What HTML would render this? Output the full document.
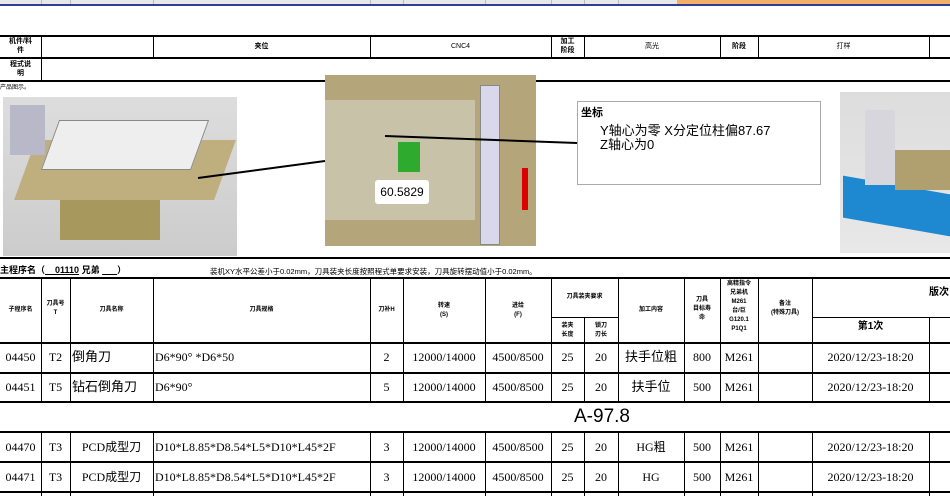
<!DOCTYPE html>
<html><head><meta charset="utf-8"><style>
body{margin:0;width:950px;height:496px;overflow:hidden;background:#fff;font-family:"Liberation Sans","Noto Sans CJK SC",sans-serif;position:relative}
div{position:absolute;box-sizing:border-box}
.h{background:#000;height:2px}
.v{background:#000;width:1px}
.t{font-size:7px;font-weight:bold;text-align:center;line-height:9px}
.c{font-family:"Liberation Serif","Noto Sans CJK SC",serif;font-size:12px;text-align:center;line-height:30px;height:30px}
.g{background:#bbb;width:1px;top:0;height:4px}
</style></head><body>
<div style="left:0;top:0;width:950px;height:4px;background:#e8e8e8"></div>
<div style="left:677px;top:0;width:273px;height:4px;background:#f4b066"></div>
<div class="g" style="left:41px"></div><div class="g" style="left:70px"></div><div class="g" style="left:153px"></div><div class="g" style="left:370px"></div><div class="g" style="left:403px"></div><div class="g" style="left:485px"></div><div class="g" style="left:551px"></div><div class="g" style="left:584px"></div><div class="g" style="left:618px"></div>
<div style="left:0;top:4px;width:950px;height:2px;background:#2b3f9a"></div>

<div class="h" style="left:0;top:35px;width:950px"></div>
<div class="h" style="left:0;top:57px;width:950px"></div>
<div class="h" style="left:0;top:80px;width:950px"></div>
<div class="v" style="left:41px;top:35px;height:46px"></div>
<div class="v" style="left:153px;top:35px;height:23px"></div>
<div class="v" style="left:370px;top:35px;height:23px"></div>
<div class="v" style="left:551px;top:35px;height:23px"></div>
<div class="v" style="left:584px;top:35px;height:23px"></div>
<div class="v" style="left:720px;top:35px;height:23px"></div>
<div class="v" style="left:758px;top:35px;height:23px"></div>
<div class="v" style="left:929px;top:35px;height:23px"></div>
<div class="t" style="left:0;top:37px;width:41px">机件/料<br>件</div>
<div class="t" style="left:153px;top:42px;width:217px">夹位</div>
<div class="t" style="left:370px;top:42px;width:181px;font-weight:normal">CNC4</div>
<div class="t" style="left:551px;top:37px;width:33px">加工<br>阶段</div>
<div class="t" style="left:584px;top:42px;width:136px;font-weight:normal">高光</div>
<div class="t" style="left:720px;top:42px;width:38px">阶段</div>
<div class="t" style="left:758px;top:42px;width:171px;font-weight:normal">打样</div>
<div class="t" style="left:0;top:60px;width:41px">程式说<br>明</div>
<div class="t" style="left:0;top:84px;font-size:6px;font-weight:normal">产品图示。</div>

<div style="left:3px;top:97px;width:234px;height:159px;background:linear-gradient(#ddd,#ccc)"></div>
<div style="left:25px;top:140px;width:200px;height:60px;background:#bfae7e;transform:skewX(-20deg)"></div>
<div style="left:50px;top:120px;width:150px;height:50px;background:#eee;border:1px solid #888;transform:skewX(-20deg)"></div>
<div style="left:60px;top:200px;width:100px;height:40px;background:#a7985d"></div>
<div style="left:10px;top:105px;width:35px;height:50px;background:#b8b8c8"></div>
<div style="left:325px;top:75px;width:211px;height:171px;background:#b4a67a"></div>
<div style="left:325px;top:100px;width:150px;height:120px;background:#c8c2a8"></div>
<div style="left:480px;top:85px;width:20px;height:160px;background:#d8d8ea;border:1px solid #888"></div>
<div style="left:398px;top:142px;width:22px;height:30px;background:#2eaa2e"></div>
<div style="left:522px;top:168px;width:6px;height:42px;background:#d00"></div>
<div style="left:375px;top:180px;width:54px;height:24px;background:#fff;border-radius:3px;font-size:12px;line-height:24px;text-align:center">60.5829</div>
<svg style="position:absolute;left:0;top:0" width="950" height="300"><line x1="198" y1="178" x2="325" y2="161" stroke="#000" stroke-width="2"/><line x1="385" y1="136" x2="577" y2="143" stroke="#000" stroke-width="2"/></svg>
<div style="left:577px;top:101px;width:244px;height:84px;border:1px solid #aaa;background:#fff;font-size:13px;line-height:14px">
<div style="left:3px;top:4px;font-weight:bold;font-size:11px">坐标</div>
<div style="left:22px;top:22px">Y轴心为零 X分定位柱偏87.67</div>
<div style="left:22px;top:36px">Z轴心为0</div></div>
<div style="left:840px;top:92px;width:110px;height:161px;background:linear-gradient(#ddd,#e8e8e8)"></div>
<div style="left:843px;top:185px;width:107px;height:42px;background:#1e88d0;transform:skewY(10deg)"></div>
<div style="left:865px;top:110px;width:30px;height:75px;background:#d6d6dc"></div>
<div style="left:895px;top:150px;width:55px;height:40px;background:#b0a070"></div>
<div class="h" style="left:0;top:257px;width:950px"></div>

<div class="t" style="left:0;top:266px;font-size:9px;text-align:left">主程序名（<u>&nbsp;&nbsp;&nbsp;&nbsp;01110</u> 兄弟 <u>&nbsp;&nbsp;&nbsp;&nbsp;&nbsp;&nbsp;</u>）</div>
<div class="t" style="left:210px;top:267px;font-size:7.5px;text-align:left;font-weight:normal">装机XY水平公差小于0.02mm，刀具装夹长度按照程式单要求安装，刀具旋转摆动值小于0.02mm。</div>

<div class="h" style="left:0;top:277px;width:950px"></div>
<div class="h" style="left:551px;top:317px;width:67px;height:1px"></div>
<div class="h" style="left:812px;top:317px;width:138px;height:1px"></div>
<div class="h" style="left:0;top:342px;width:950px"></div>
<div class="h" style="left:0;top:372px;width:950px"></div>
<div class="h" style="left:0;top:401px;width:950px"></div>
<div class="h" style="left:0;top:431px;width:950px"></div>
<div class="h" style="left:0;top:461px;width:950px"></div>
<div class="h" style="left:0;top:491px;width:950px"></div>
<div class="v" style="left:41px;top:277px;height:125px"></div><div class="v" style="left:41px;top:431px;height:65px"></div>
<div class="v" style="left:70px;top:277px;height:125px"></div><div class="v" style="left:70px;top:431px;height:65px"></div>
<div class="v" style="left:153px;top:277px;height:125px"></div><div class="v" style="left:153px;top:431px;height:65px"></div>
<div class="v" style="left:370px;top:277px;height:125px"></div><div class="v" style="left:370px;top:431px;height:65px"></div>
<div class="v" style="left:403px;top:277px;height:125px"></div><div class="v" style="left:403px;top:431px;height:65px"></div>
<div class="v" style="left:485px;top:277px;height:125px"></div><div class="v" style="left:485px;top:431px;height:65px"></div>
<div class="v" style="left:551px;top:277px;height:125px"></div><div class="v" style="left:551px;top:431px;height:65px"></div>
<div class="v" style="left:584px;top:318px;height:84px"></div><div class="v" style="left:584px;top:431px;height:65px"></div>
<div class="v" style="left:618px;top:277px;height:125px"></div><div class="v" style="left:618px;top:431px;height:65px"></div>
<div class="v" style="left:684px;top:277px;height:125px"></div><div class="v" style="left:684px;top:431px;height:65px"></div>
<div class="v" style="left:720px;top:277px;height:125px"></div><div class="v" style="left:720px;top:431px;height:65px"></div>
<div class="v" style="left:758px;top:277px;height:125px"></div><div class="v" style="left:758px;top:431px;height:65px"></div>
<div class="v" style="left:812px;top:277px;height:125px"></div><div class="v" style="left:812px;top:431px;height:65px"></div>
<div class="v" style="left:929px;top:318px;height:84px"></div><div class="v" style="left:929px;top:431px;height:65px"></div>

<div class="t" style="left:0;top:306px;width:41px;font-size:6px">子程序名</div>
<div class="t" style="left:41px;top:300px;width:29px;font-size:6px">刀具号<br>T</div>
<div class="t" style="left:70px;top:306px;width:83px;font-size:6px">刀具名称</div>
<div class="t" style="left:153px;top:306px;width:217px;font-size:6px">刀具规格</div>
<div class="t" style="left:370px;top:306px;width:33px;font-size:6px">刀补H</div>
<div class="t" style="left:403px;top:302px;width:82px;font-size:6px">转速<br>(S)</div>
<div class="t" style="left:485px;top:302px;width:66px;font-size:6px">进给<br>(F)</div>
<div class="t" style="left:551px;top:293px;width:67px;font-size:6px">刀具装夹要求</div>
<div class="t" style="left:551px;top:322px;width:33px;font-size:6px">装夹<br>长度</div>
<div class="t" style="left:584px;top:322px;width:34px;font-size:6px">锁刀<br>刃长</div>
<div class="t" style="left:618px;top:306px;width:66px;font-size:6px">加工内容</div>
<div class="t" style="left:684px;top:296px;width:36px;font-size:6px">刀具<br>目标寿<br>命</div>
<div class="t" style="left:720px;top:280px;width:38px;font-size:6px">高精指令<br>兄弟机<br>M261<br>台/巨<br>G120.1<br>P1Q1</div>
<div class="t" style="left:758px;top:300px;width:54px;font-size:6px">备注<br>(特殊刀具)</div>
<div class="t" style="left:929px;top:288px;font-size:10px;text-align:left;white-space:nowrap">版次</div>
<div class="t" style="left:812px;top:322px;width:117px;font-size:10px">第1次</div>

<div class="c" style="left:0;top:342px;width:41px">04450</div><div class="c" style="left:41px;top:342px;width:29px">T2</div><div class="c" style="left:72px;top:342px;text-align:left;font-size:13px">倒角刀</div><div class="c" style="left:155px;top:342px;text-align:left">D6*90° *D6*50</div><div class="c" style="left:370px;top:342px;width:33px">2</div><div class="c" style="left:403px;top:342px;width:82px">12000/14000</div><div class="c" style="left:485px;top:342px;width:66px">4500/8500</div><div class="c" style="left:551px;top:342px;width:33px">25</div><div class="c" style="left:584px;top:342px;width:34px">20</div><div class="c" style="left:618px;top:342px;width:66px;font-size:13px">扶手位粗</div><div class="c" style="left:684px;top:342px;width:36px">800</div><div class="c" style="left:720px;top:342px;width:38px">M261</div><div class="c" style="left:812px;top:342px;width:117px">2020/12/23-18:20</div>

<div class="c" style="left:0;top:372px;width:41px">04451</div><div class="c" style="left:41px;top:372px;width:29px">T5</div><div class="c" style="left:72px;top:372px;text-align:left;font-size:13px">钻石倒角刀</div><div class="c" style="left:155px;top:372px;text-align:left">D6*90°</div><div class="c" style="left:370px;top:372px;width:33px">5</div><div class="c" style="left:403px;top:372px;width:82px">12000/14000</div><div class="c" style="left:485px;top:372px;width:66px">4500/8500</div><div class="c" style="left:551px;top:372px;width:33px">25</div><div class="c" style="left:584px;top:372px;width:34px">20</div><div class="c" style="left:618px;top:372px;width:66px;font-size:13px">扶手位</div><div class="c" style="left:684px;top:372px;width:36px">500</div><div class="c" style="left:720px;top:372px;width:38px">M261</div><div class="c" style="left:812px;top:372px;width:117px">2020/12/23-18:20</div>

<div style="left:574px;top:403px;font-size:19px;line-height:28px">A-97.8</div>

<div class="c" style="left:0;top:432px;width:41px">04470</div><div class="c" style="left:41px;top:432px;width:29px">T3</div><div class="c" style="left:70px;top:432px;width:83px">PCD成型刀</div><div class="c" style="left:155px;top:432px;text-align:left">D10*L8.85*D8.54*L5*D10*L45*2F</div><div class="c" style="left:370px;top:432px;width:33px">3</div><div class="c" style="left:403px;top:432px;width:82px">12000/14000</div><div class="c" style="left:485px;top:432px;width:66px">4500/8500</div><div class="c" style="left:551px;top:432px;width:33px">25</div><div class="c" style="left:584px;top:432px;width:34px">20</div><div class="c" style="left:618px;top:432px;width:66px">HG粗</div><div class="c" style="left:684px;top:432px;width:36px">500</div><div class="c" style="left:720px;top:432px;width:38px">M261</div><div class="c" style="left:812px;top:432px;width:117px">2020/12/23-18:20</div>

<div class="c" style="left:0;top:462px;width:41px">04471</div><div class="c" style="left:41px;top:462px;width:29px">T3</div><div class="c" style="left:70px;top:462px;width:83px">PCD成型刀</div><div class="c" style="left:155px;top:462px;text-align:left">D10*L8.85*D8.54*L5*D10*L45*2F</div><div class="c" style="left:370px;top:462px;width:33px">3</div><div class="c" style="left:403px;top:462px;width:82px">12000/14000</div><div class="c" style="left:485px;top:462px;width:66px">4500/8500</div><div class="c" style="left:551px;top:462px;width:33px">25</div><div class="c" style="left:584px;top:462px;width:34px">20</div><div class="c" style="left:618px;top:462px;width:66px">HG</div><div class="c" style="left:684px;top:462px;width:36px">500</div><div class="c" style="left:720px;top:462px;width:38px">M261</div><div class="c" style="left:812px;top:462px;width:117px">2020/12/23-18:20</div>
</body></html>
